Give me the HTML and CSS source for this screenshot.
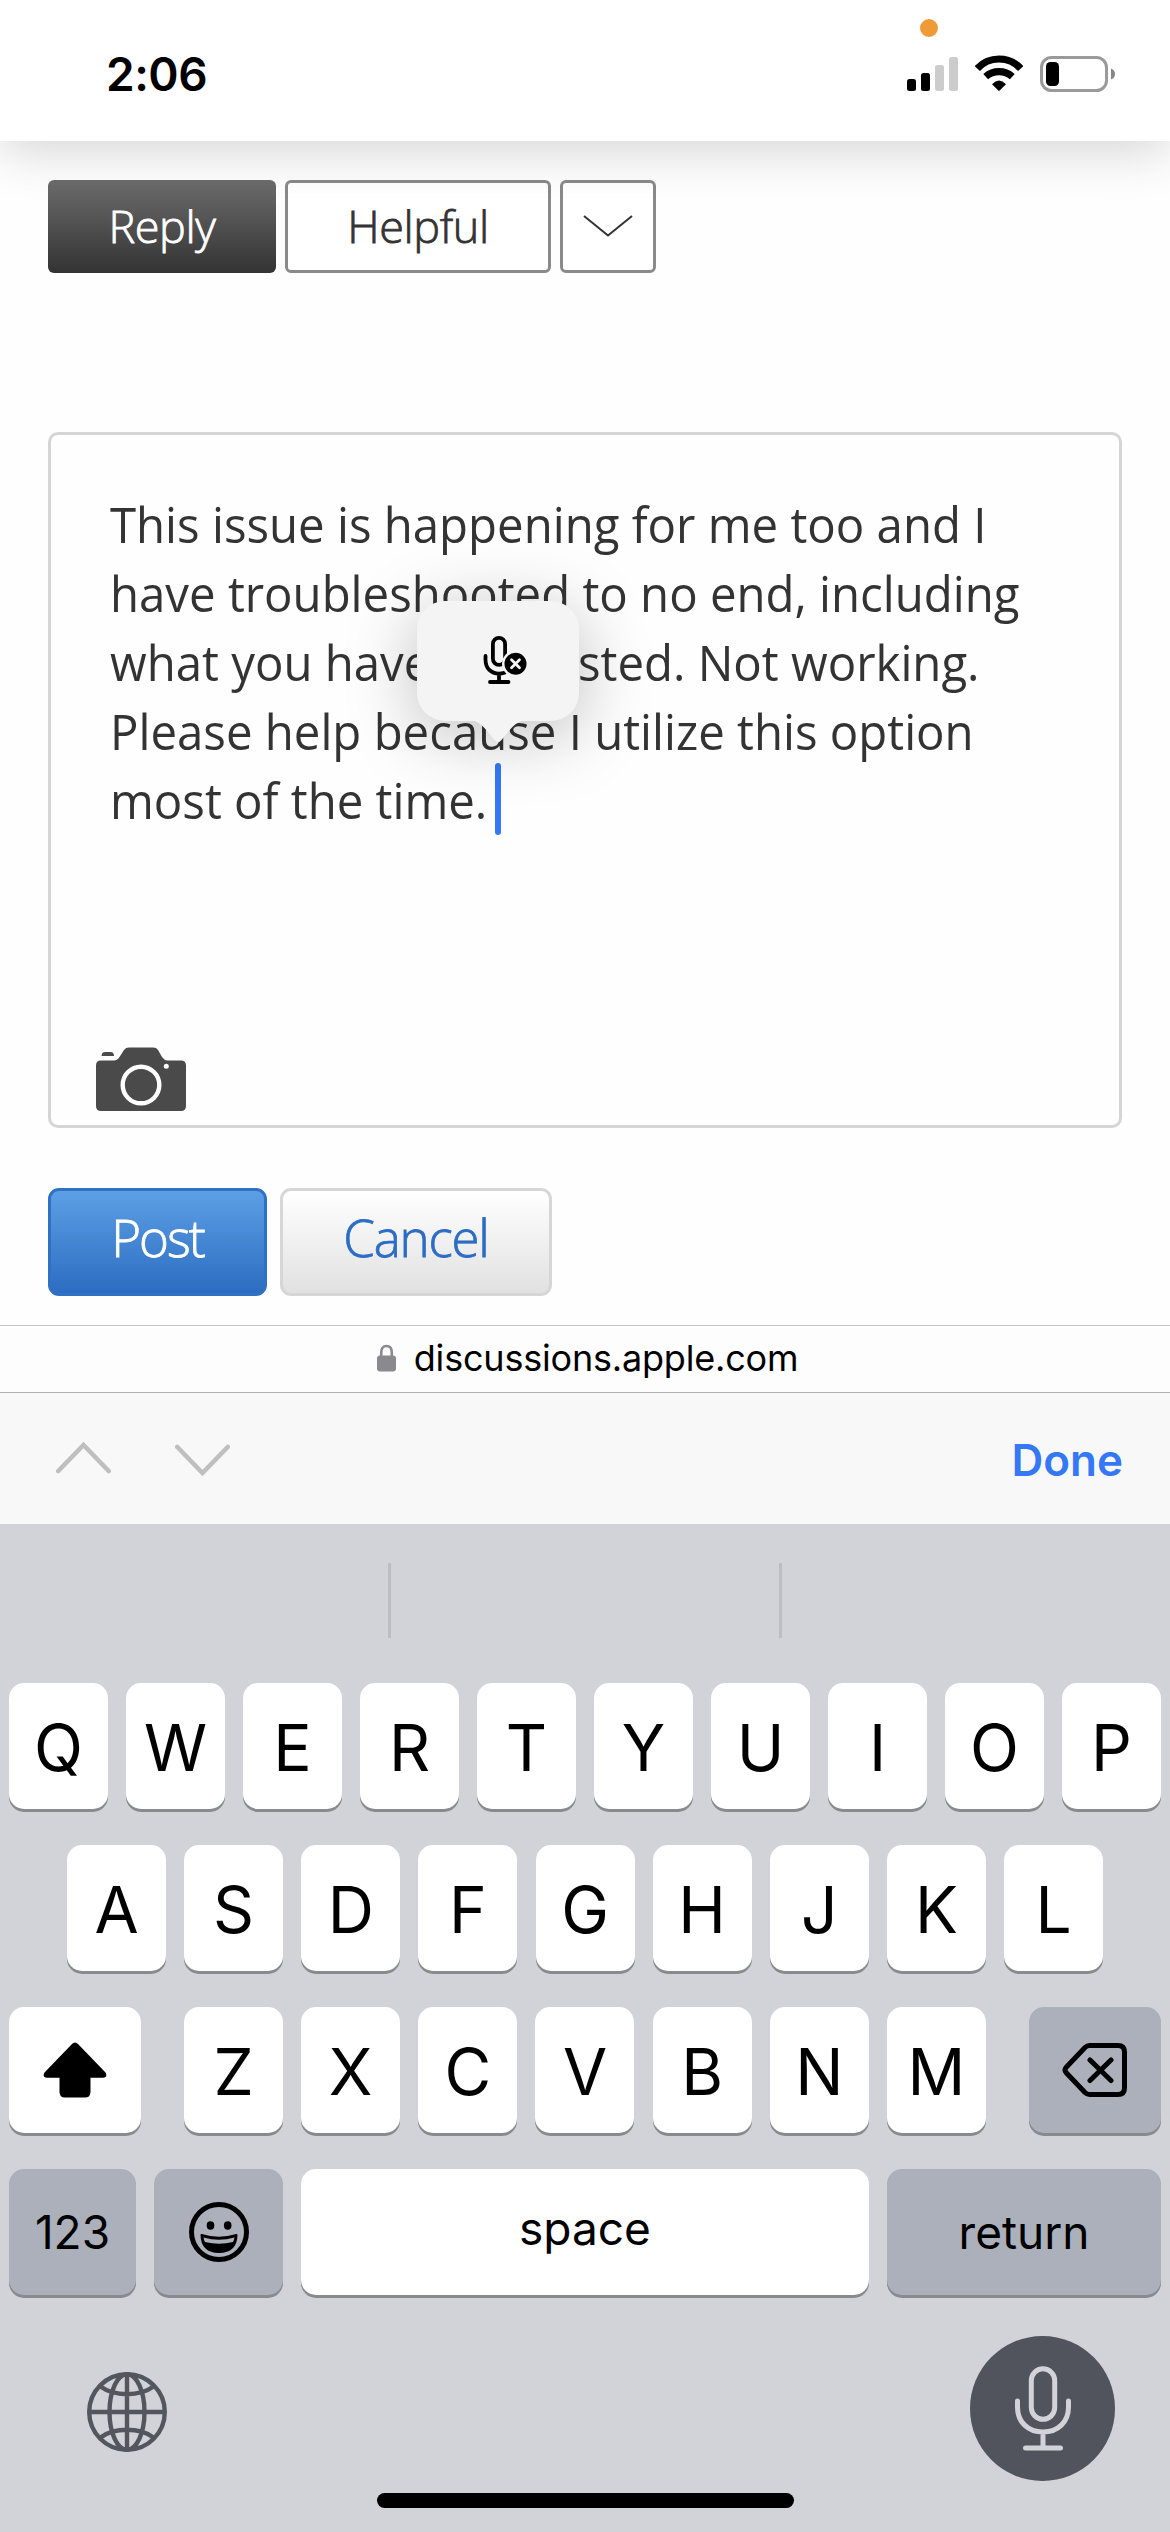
FILE: index.html
```
<!DOCTYPE html>
<html lang="en">
<head>
<meta charset="utf-8">
<title>Apple Discussions</title>
<link rel="stylesheet" href="styles.css">
</head>
<body>
<div class="phone">
  <header class="status">
    <span class="time">2:06</span>
    <span class="recording-dot"></span>
    <div class="status-icons">
      <svg class="signal" width="51" height="37" viewBox="0 0 51 37">
        <rect x="0" y="24" width="9" height="12" rx="2.5"/>
        <rect x="14" y="18" width="9" height="18" rx="2.5"/>
        <rect x="28" y="10" width="9" height="26" rx="2.5" fill="#ccc"/>
        <rect x="42" y="2" width="9" height="34" rx="2.5" fill="#ccc"/>
      </svg>
      <svg class="wifi" width="48" height="37" viewBox="0 0 48 37">
        <path d="M2.3 13.5A29.5 29.5 0 0 1 45.7 13.5M10.7 21.6A20 20 0 0 1 37.3 21.6" fill="none" stroke="#000" stroke-width="7.2"/>
        <path d="M17 29.2Q24 22 31 29.2L24.6 35.6Q24 36.2 23.4 35.6Z"/>
      </svg>
      <svg class="battery" width="76" height="37" viewBox="0 0 76 37">
        <rect x="1.5" y="2.5" width="65" height="33" rx="10" fill="none" stroke="#9a9a9a" stroke-width="3"/>
        <rect x="6" y="7" width="13" height="24" rx="4.5"/>
        <path d="M71 13.5Q75 15 75 19T71 24.5Z" fill="#858585"/>
      </svg>
    </div>
  </header>

  <main class="page">
    <div class="post-actions">
      <button class="btn reply">Reply</button>
      <button class="btn helpful">Helpful</button>
      <button class="btn more">
        <svg width="50" height="24" viewBox="0 0 50 24"><path d="M1 2L25 21.5L49 2" fill="none" stroke="#333" stroke-width="2"/></svg>
      </button>
    </div>

    <section class="editor">
      <p class="draft">This issue is happening for me too and I<br>have troubleshooted to no end, including<br>what you have <span class="shifted">suggested. Not working.</span><br>Please help because I utilize this option<br>most of the time.</p>
      <svg class="camera" width="90" height="64" viewBox="0 0 90 64">
        <path d="M5 13.4H18Q21.500 13.400 23.500 10L28 3Q29.800 .6 33 .6H57Q60.500 .6 62 3L66 10Q68.500 13.400 71 13.400H85Q90 13.400 90 18.400V59Q90 64 85 64H5Q0 64 0 59V18.400Q0 13.400 5 13.400Z" fill="#4a4a4a"/>
        <path d="M5.600 9Q5.600 5 9 5H14.500Q18 5 18 9Z" fill="#4a4a4a"/>
        <circle cx="45" cy="38" r="18.300" fill="none" stroke="#fff" stroke-width="4.400"/>
        <circle cx="70.300" cy="19.300" r="2.500" fill="#fff"/>
      </svg>
      <span class="caret"></span>
      <div class="dictation">
        <svg class="dictation-icon" width="46" height="50" viewBox="0 0 46 50">
          <g fill="none" stroke="#000" stroke-width="3.800" stroke-linecap="round">
            <rect x="10.900" y="3.900" width="12.200" height="27" rx="6.100"/>
            <path d="M3.500 22V25.500C3.500 34.500 9 39.600 17 39.600S30.500 34.500 30.500 27M17 39.600V48.200M8 48H26.500"/>
          </g>
          <circle cx="33.500" cy="29.700" r="13.500" fill="#f4f4f4"/>
          <circle cx="33.500" cy="29.700" r="11"/>
          <path d="M29.500 25.700L37.500 33.700M37.500 25.700L29.500 33.700" stroke="#f4f4f4" stroke-width="2.800" stroke-linecap="round"/>
        </svg>
        <svg class="tail" width="60" height="23" viewBox="0 0 60 23"><path d="M0 0C11 1 14 5 19 11L27 20.500Q30 24 33 20.500L41 11C46 5 49 1 60 0Z" fill="#f4f4f4"/></svg>
      </div>
    </section>

    <div class="form-actions">
      <button class="btn post">Post</button>
      <button class="btn cancel">Cancel</button>
    </div>
  </main>

  <div class="url-bar">
    <svg width="19" height="28" viewBox="0 0 19 28">
      <path d="M4.200 13V8.500C4.200 4.500 6 2 9.500 2S14.800 4.500 14.800 8.500V13" fill="none" stroke="#8a8a8e" stroke-width="2.600"/>
      <rect y="11.500" width="19" height="16" rx="3" fill="#8a8a8e"/>
    </svg>
    <span>discussions.apple.com</span>
  </div>

  <div class="accessory">
    <svg width="174" height="36" viewBox="0 0 174 36" fill="none" stroke="#bfbfbf" stroke-width="4.600" stroke-linecap="round">
      <path d="M2.300 30L27.500 4L52.700 30M121.300 6L146.500 32L171.700 6"/>
    </svg>
    <span class="done">Done</span>
  </div>

  <div class="keyboard">
    <div class="suggestions"><i></i><i></i><i></i></div>
    <div class="row"><b>Q</b><b>W</b><b>E</b><b>R</b><b>T</b><b>Y</b><b>U</b><b>I</b><b>O</b><b>P</b></div>
    <div class="row inset"><b>A</b><b>S</b><b>D</b><b>F</b><b>G</b><b>H</b><b>J</b><b>K</b><b>L</b></div>
    <div class="row">
      <b class="shift"><svg width="64" height="56" viewBox="0 0 64 56"><path d="M29 2Q32 -1 35 2L62.500 30.500Q65 35.500 60 35.800H47.500V50Q47.500 55.500 42 55.500H22Q16.500 55.500 16.500 50V35.800H4Q-1 35.500 1.500 30.500Z"/></svg></b>
      <div class="letters"><b>Z</b><b>X</b><b>C</b><b>V</b><b>B</b><b>N</b><b>M</b></div>
      <b class="dark delete"><svg width="66" height="56" viewBox="0 0 66 56" fill="none" stroke="#000" stroke-width="5" stroke-linecap="round" stroke-linejoin="round"><path d="M27.500 3.500H56Q62.500 3.500 62.500 10V46Q62.500 52.500 56 52.500H27.500Q25 52.500 23 50.500L4 30.500Q2 28 4 25.500L23 5.500Q25 3.500 27.500 3.500ZM28 18L49 38.500M49 18L28 38.500"/></svg></b>
    </div>
    <div class="row bottom">
      <b class="dark numbers">123</b>
      <b class="dark emoji"><svg width="60" height="60" viewBox="0 0 60 60">
        <circle cx="30" cy="30" r="27.500" fill="none" stroke="#000" stroke-width="5"/>
        <ellipse cx="21.500" cy="23.500" rx="3.800" ry="4.200"/><ellipse cx="38.700" cy="23.500" rx="3.800" ry="4.200"/>
        <path d="M12.500 33Q30 38.500 47.500 33Q47 50 30 50T12.500 33Z" stroke="#000" stroke-width="2" stroke-linejoin="round"/>
        <path d="M14.500 35.500Q30 40 45.500 35.500Q45 38.500 44 40Q30 43.500 16 40Q15 38.500 14.500 35.500Z" fill="#abb0bb"/>
      </svg></b>
      <b class="space">space</b>
      <b class="dark return">return</b>
    </div>
    <div class="dock">
      <svg width="80" height="80" viewBox="0 0 80 80" fill="none" stroke="#53565d" stroke-width="4.400">
        <circle cx="40" cy="40" r="37.800"/><ellipse cx="40" cy="40" rx="17.500" ry="37.800"/>
        <path d="M40 2V78M2 40H78M13.500 14.500Q24 22.200 40 22.200T66.500 14.500M13.500 65.500Q24 57.800 40 57.800T66.500 65.500"/>
      </svg>
      <div class="mic"><svg width="58" height="86" viewBox="0 0 58 86" fill="none" stroke="#d2d3d8" stroke-width="5" stroke-linecap="round">
        <rect x="17.300" y="2.800" width="23.400" height="50.500" rx="11.700"/>
        <path d="M3.500 35V41C3.500 56 14 66 29 66S54.500 56 54.500 41V35M29 66V82M11.500 82H46.500"/>
      </svg></div>
    </div>
    <div class="home-indicator"></div>
  </div>
</div>
</body>
</html>
```
FILE: styles.css
```
* { box-sizing: border-box; }
body { margin: 0; background: #fff; font-family: Inter, "Liberation Sans", sans-serif; color: #000; }
svg { display: block; flex: none; }
.phone { width: 1170px; height: 2532px; display: flex; flex-direction: column; overflow: hidden; background: #fefefe; }

.status {
  position: relative; z-index: 1; flex: none; height: 141px;
  display: flex; justify-content: space-between; align-items: flex-start;
  padding: 51px 55px 0 106px; background: #fff;
  box-shadow: 0 6px 54px rgba(0, 0, 0, .19);
}
.time { font-size: 46px; line-height: 46px; font-weight: 600; letter-spacing: -.5px; }
.recording-dot { position: absolute; left: 920px; top: 19px; width: 18px; height: 18px; border-radius: 50%; background: #f09a37; }
.status-icons { display: flex; padding-top: 4px; }
.wifi { margin-left: 17px; }
.battery { margin: 0 -1px 0 17px; }

.page { flex: none; height: 1184px; padding: 39px 48px 0; }
.btn {
  display: flex; align-items: center; justify-content: center; margin: 0; padding: 0 0 2px;
  font-family: "Open Sans", "Noto Sans", sans-serif; font-weight: 300; white-space: nowrap;
  -webkit-text-stroke: .8px currentColor;
}
.post-actions { display: flex; gap: 9px; height: 93px; }
.post-actions .btn { font-size: 45px; border: 3px solid #8a8a8a; border-radius: 6px; background: #fff; color: #333; }
.post-actions .reply { width: 228px; border: 0; background: linear-gradient(#6c6c6c, #333); color: #fff; letter-spacing: -.4px; }
.post-actions .helpful { width: 266px; letter-spacing: -.4px; }
.post-actions .more { width: 96px; padding: 0 0 1px; }

.editor { position: relative; height: 696px; margin-top: 159px; padding: 55px 0 0 59px; border: 3px solid #d5d5d5; border-radius: 10px; background: #fefefe; }
.draft {
  margin: 0; font: 400 50px/69px "Open Sans", "Noto Sans", sans-serif; color: #333;
  white-space: nowrap; transform: scaleX(.947); transform-origin: 0 0;
}
.shifted { margin-left: 6px; }
.camera { position: absolute; left: 45px; bottom: 14px; }
.caret { position: absolute; left: 444px; top: 328px; width: 6px; height: 72px; border-radius: 3px; background: #3478f6; }
.dictation {
  position: absolute; left: 366px; top: 166px; width: 162px; height: 120px;
  border-radius: 28px; background: #f4f4f4; box-shadow: 0 12px 70px rgba(0, 0, 0, .26);
}
.dictation-icon { position: absolute; left: 65px; top: 33px; }
.tail { position: absolute; left: 51px; top: 119px; }

.form-actions { display: flex; gap: 13px; height: 108px; margin-top: 60px; }
.form-actions .btn { font-size: 51px; padding-bottom: 10px; border-radius: 11px; }
.form-actions .post { width: 219px; border: 3px solid #2f71c4; background: linear-gradient(#5c9fe5, #2d6cc1); color: #fff; letter-spacing: -2px; }
.form-actions .cancel { width: 272px; border: 3px solid #d6d6d6; background: linear-gradient(#fff, #e1e1e1); color: #2d6cc4; letter-spacing: -1.200px; }

.url-bar {
  flex: none; height: 68px; display: flex; align-items: center; justify-content: center; gap: 18px;
  padding: 0 0 2px 5px; border-top: 1px solid #c4c4c4; border-bottom: 1px solid #b0b0b0;
  background: #fdfdfd; font-size: 36px; letter-spacing: -.2px;
}
.accessory { flex: none; height: 131px; display: flex; align-items: center; justify-content: space-between; padding: 0 47px 0 56px; background: #f8f8f8; }
.done { padding-top: 3px; font-size: 44px; font-weight: 600; color: #3478f6; }

.keyboard { flex: 1; display: flex; flex-direction: column; background: #d2d3d8; }
.suggestions { flex: none; height: 159px; display: flex; padding: 39px 0 45px; }
.suggestions i { flex: 1; }
.suggestions i + i { border-left: 3px solid #bdbec3; }
.row { flex: none; height: 126px; margin-bottom: 36px; padding: 0 9px; display: flex; justify-content: space-between; }
.row.inset { padding: 0 67px; }
.letters { width: 802px; display: flex; justify-content: space-between; }
.row b {
  display: flex; align-items: center; justify-content: center; width: 99px; height: 126px; padding-top: 3px;
  border-radius: 15px; background: #fff; box-shadow: 0 3px 0 #898a8d; font-size: 64px; font-weight: 400;
}
.row .dark { background: #abb0bb; }
.row .shift, .row .delete { width: 132px; padding-top: 0; }
.row .delete { padding-right: 1px; }
.bottom b { font-size: 46px; padding-top: 0; }
.row .numbers { width: 127px; }
.row .emoji { width: 129px; }
.row .space { width: 568px; padding-bottom: 9px; }
.row .return { width: 274px; }
.bottom { margin-bottom: 41px; }
.dock { flex: none; height: 145px; display: flex; align-items: center; justify-content: space-between; padding: 0 55px 0 87px; }
.dock > svg { margin-top: 7px; }
.mic { display: flex; align-items: center; justify-content: center; width: 145px; height: 145px; border-radius: 50%; background: #51545c; }
.home-indicator { width: 417px; height: 15px; margin: 12px auto 0; border-radius: 8px; background: #000; }
```
